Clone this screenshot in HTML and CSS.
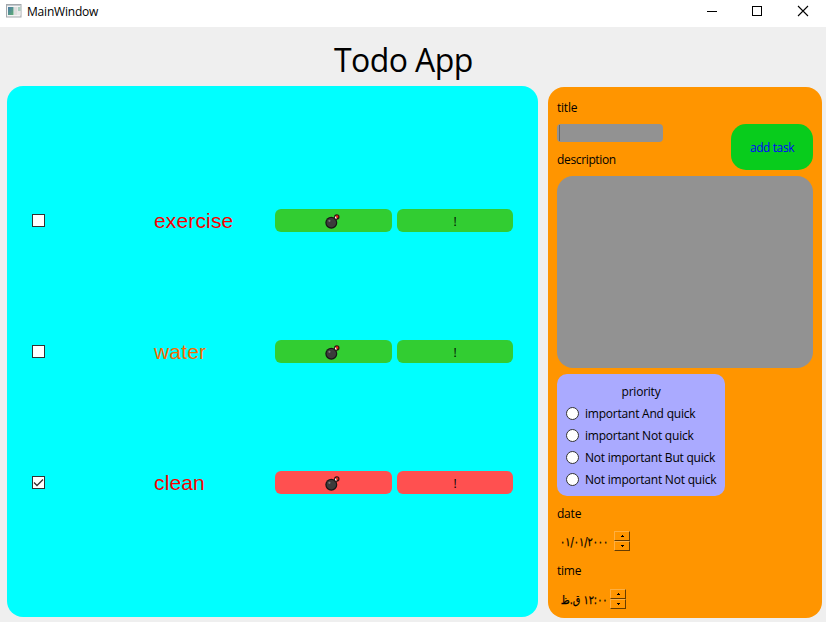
FILE: index.html
```html
<!DOCTYPE html>
<html lang="en">
<head>
<meta charset="utf-8">
<title>MainWindow</title>
<link rel="stylesheet" href="styles.css">
</head>
<body>
<svg class="defs" width="0" height="0" aria-hidden="true">
  <defs>
    <linearGradient id="pane" x1="0" y1="0" x2="1" y2="1"><stop offset="0" stop-color="#4a79a8"/><stop offset="1" stop-color="#5fae74"/></linearGradient>
    <symbol id="bomb" viewBox="0 0 15 15">
      <circle cx="6.3" cy="8.7" r="6" fill="#161616"/>
      <circle cx="6.3" cy="8.7" r="4.8" fill="#3b3b3b"/>
      <circle cx="4.4" cy="6.8" r="1.1" fill="#777"/>
      <path d="M8.5 4.5L10 3l2 2-1.500 1.500z" fill="#222"/>
      <circle cx="11.800" cy="3" r="2.700" fill="#301010"/>
      <path d="M10 2.500h2v2h-2z" fill="#fff"/>
      <path d="M11 1.500h2.200v2.200H11z" fill="#f22a1c"/>
    </symbol>
  </defs>
</svg>
<header class="titlebar">
  <svg class="app-icon" width="16" height="14" viewBox="0 0 16 14">
    <rect x=".5" y=".5" width="14.5" height="12.5" fill="#f4f4f4" stroke="#a4a9ad"/>
    <path d="M1 1.5h14" stroke="#c3c9ce"/>
    <rect x="2" y="3" width="5.5" height="8" fill="url(#pane)"/>
    <rect x="8" y="3" width="3.5" height="8" fill="#dedede"/>
    <rect x="12" y="3" width="2.5" height="4" fill="#a9cfc0"/>
    <rect x="12" y="7" width="2.5" height="4" fill="#e9e9e9"/>
  </svg>
  <span class="window-name">MainWindow</span>
  <svg class="window-controls" width="102" height="12" viewBox="0 0 102 12" shape-rendering="crispEdges">
    <path d="M0 6.5h10" stroke="#000"/>
    <rect x="45.5" y="1.5" width="9" height="9" fill="none" stroke="#000"/>
    <path d="M91 1l10 10M101 1l-10 10" stroke="#000" stroke-width="1.1" shape-rendering="auto"/>
  </svg>
</header>
<h1>Todo App</h1>
<main>
  <section class="tasks">
    <div class="task">
      <span class="check"></span><span class="name urgent">exercise</span>
      <div class="bar"><svg width="15" height="15"><use href="#bomb"/></svg></div><div class="bar">!</div>
    </div>
    <div class="task">
      <span class="check"></span><span class="name medium">water</span>
      <div class="bar"><svg width="15" height="15"><use href="#bomb"/></svg></div><div class="bar">!</div>
    </div>
    <div class="task done">
      <span class="check"><svg width="11" height="11" viewBox="0 0 11 11"><path d="M1 5.5l3 3 6-6" fill="none" stroke="#333" stroke-width="1.3"/></svg></span><span class="name urgent">clean</span>
      <div class="bar"><svg width="15" height="15"><use href="#bomb"/></svg></div><div class="bar">!</div>
    </div>
  </section>
  <section class="form">
    <div class="top">
      <div class="fields">
        <div class="label title-label">title</div>
        <div class="title-input"></div>
        <div class="label desc-label">description</div>
      </div>
      <div class="add">add task</div>
    </div>
    <div class="description"></div>
    <div class="priority">
      <div class="heading">priority</div>
      <div class="option"><i></i><span>important And quick</span></div>
      <div class="option"><i></i><span>important Not quick</span></div>
      <div class="option"><i></i><span>Not important But quick</span></div>
      <div class="option"><i></i><span>Not important Not quick</span></div>
    </div>
    <div class="label date-label">date</div>
    <div class="edit date"><span>٠١/٠١/٢٠٠٠</span>
      <div class="spin"><b><svg width="3" height="2"><path d="M1 0h1v1h1v1H0V1h1z"/></svg></b><b><svg width="3" height="2"><path d="M0 0h3v1H2v1H1V1H0z"/></svg></b></div>
    </div>
    <div class="label time-label">time</div>
    <div class="edit time"><span dir="rtl">١٢:٠٠ ق.ظ</span>
      <div class="spin"><b><svg width="3" height="2"><path d="M1 0h1v1h1v1H0V1h1z"/></svg></b><b><svg width="3" height="2"><path d="M0 0h3v1H2v1H1V1H0z"/></svg></b></div>
    </div>
  </section>
</main>
</body>
</html>
```
FILE: styles.css
```css
* { box-sizing: border-box; }
body {
  margin: 0;
  width: 826px;
  height: 622px;
  overflow: hidden;
  background: #efefef;
  color: #000;
  font: 12px/16px "Open Sans", "Noto Sans", sans-serif;
  white-space: nowrap;
}
svg { display: block; flex: none; }
.defs { position: absolute; }
.titlebar {
  height: 27px;
  background: #fff;
  display: flex;
  align-items: flex-start;
  padding: 4px 17px 0 6px;
}
.window-name { margin: 0 auto 0 5px; letter-spacing: -.2px; }
.window-controls { margin-top: 1px; }
h1 {
  margin: 0;
  height: 59px;
  padding: 10px 0 0 334px;
  font-size: 32px;
  line-height: 46px;
  font-weight: 400;
  letter-spacing: -.6px;
}
main { display: flex; align-items: flex-start; gap: 10px; padding-left: 7px; }
.tasks {
  width: 531px;
  height: 531px;
  padding: 69px 25px;
  border-radius: 16px;
  background: #0ff;
}
.task {
  height: 131px;
  display: grid;
  grid-template-columns: 122px 121px 117px 116px;
  align-items: center;
}
.task .bar:last-child { margin-left: 5px; width: 116px; padding-top: 2px; }
.check {
  width: 13px;
  height: 13px;
  border: 1px solid #333;
  background: #fff;
}
.name { font: 21px/24px "Liberation Sans", sans-serif; padding-top: 1px; letter-spacing: .15px; }
.urgent { color: #f80000; }
.medium { color: #f86a00; }
.bar {
  height: 23px;
  border-radius: 6px;
  background: #32cd32;
  display: flex;
  align-items: center;
  justify-content: center;
  padding-top: 1px;
}
.bar svg { margin-right: 2px; }
.done .bar { background: #ff5050; }
.form {
  width: 274px;
  height: 531px;
  margin-top: 1px;
  padding: 13px 9px 0;
  border-radius: 16px;
  background: #ff9500;
  letter-spacing: -.22px;
}
.top { display: flex; justify-content: space-between; height: 76px; }
.label { height: 16px; }
.desc-label { letter-spacing: -.35px; }
.title-input {
  width: 106px;
  height: 18px;
  margin: 8px 0 10px;
  border-radius: 4px;
  background: #929292;
  padding: 1px 2px;
}
.title-input::before { content: ""; display: block; width: 1px; height: 16px; background: #666; }
.add {
  width: 82px;
  height: 46px;
  margin-top: 24px;
  border-radius: 15px;
  background: #08cc1c;
  color: #00f;
  text-align: center;
  line-height: 47px;
  letter-spacing: -.4px;
}
.description { height: 192px; border-radius: 16px; background: #929292; }
.priority {
  width: 168px;
  height: 122px;
  margin: 6px 0 10px;
  padding: 7px 9px;
  border-radius: 10px;
  background: #aaf;
}
.heading { height: 22px; line-height: 22px; text-align: center; }
.option { height: 22px; display: flex; align-items: center; }
.option i {
  flex: none;
  width: 13px;
  height: 13px;
  margin: -1px 6px 0 0;
  border: 1px solid #333;
  border-radius: 50%;
  background: #fff;
}
.edit { display: flex; align-items: center; height: 22px; width: 120px; padding-left: 3px; }
.edit > span { flex: none; font: 12px/16px "DejaVu Sans", sans-serif; padding-top: 2px; -webkit-text-stroke: .25px #000; }
.date { margin: 8px 0 11px; }
.date > span { width: 54px; letter-spacing: -1.2px; transform: scaleX(.81); transform-origin: left; }
.time { margin-top: 9px; }
.time > span { width: 50px; padding-right: 3px; letter-spacing: 0; transform: scaleX(.81); transform-origin: right; }
.spin { flex: none; width: 16px; height: 20px; }
.spin b {
  display: flex;
  align-items: center;
  justify-content: center;
  height: 10px;
  border: 1px solid #ffaf40;
  border-right-color: #663c00;
  border-bottom-color: #663c00;
}
```
